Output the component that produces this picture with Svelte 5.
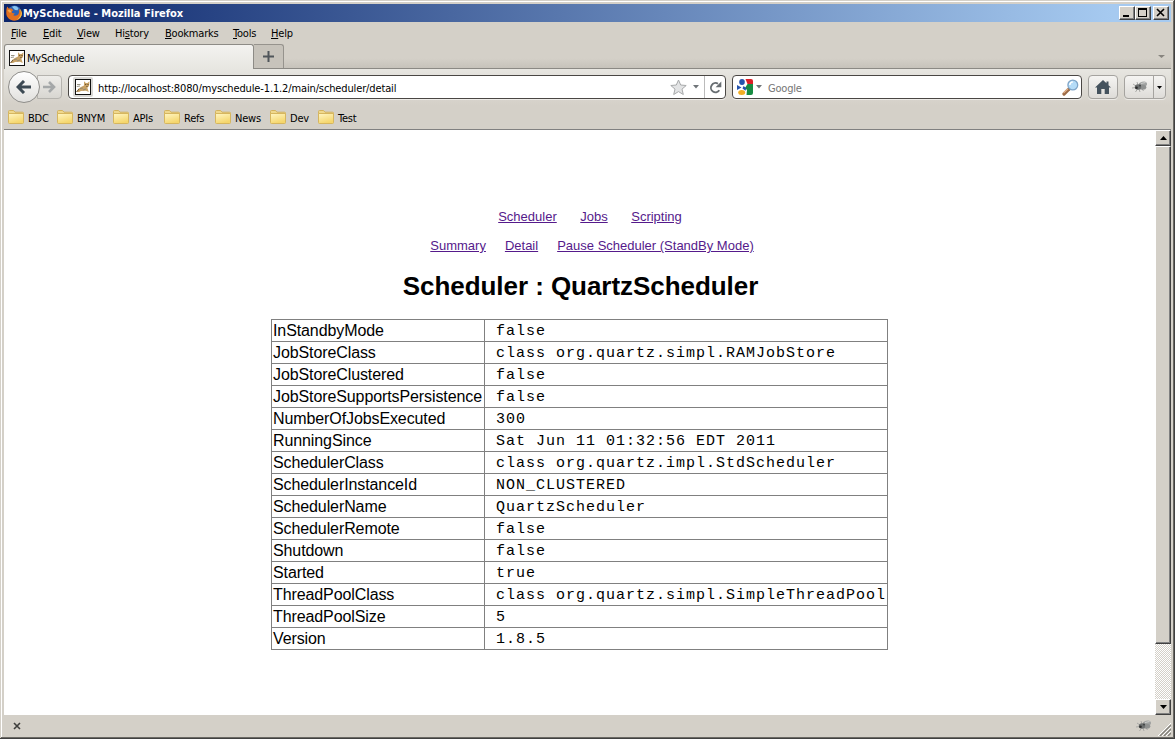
<script>
  const menus = [
    ['F', 'ile', '', 32], ['E', 'dit', '', 34], ['V', 'iew', '', 38], ['s', 'tory', 'Hi', 50],
    ['B', 'ookmarks', '', 68], ['T', 'ools', '', 38], ['H', 'elp', '', 40]
  ];
  const folders = [['BDC', 49], ['BNYM', 56], ['APIs', 51], ['Refs', 51], ['News', 55], ['Dev', 48], ['Test', 50]];
  const rows = [
    ['InStandbyMode', 'false'],
    ['JobStoreClass', 'class org.quartz.simpl.RAMJobStore'],
    ['JobStoreClustered', 'false'],
    ['JobStoreSupportsPersistence', 'false'],
    ['NumberOfJobsExecuted', '300'],
    ['RunningSince', 'Sat Jun 11 01:32:56 EDT 2011'],
    ['SchedulerClass', 'class org.quartz.impl.StdScheduler'],
    ['SchedulerInstanceId', 'NON_CLUSTERED'],
    ['SchedulerName', 'QuartzScheduler'],
    ['SchedulerRemote', 'false'],
    ['Shutdown', 'false'],
    ['Started', 'true'],
    ['ThreadPoolClass', 'class org.quartz.simpl.SimpleThreadPool'],
    ['ThreadPoolSize', '5'],
    ['Version', '1.8.5']
  ];
</script>

{#snippet cat()}
  <svg class="cat" width="16" height="16" viewBox="0 0 16 16">
    <rect x=".5" y=".5" width="15" height="15" fill="#fff" stroke="#111" />
    <path d="M1.500 12.800Q3 9 6 8L9 6.500 9 2.200 10.800 4h1.700L14.500 2.200 14 7l-1.700 1.700L13.800 13 11 11.800 6 12 4 13z" fill="#c8a266" />
    <path d="M2 5.500h3.500M1.800 7.500L5 7M5 9.500l3-.5M8 11l3-1" stroke="#8d8877" stroke-width=".9" fill="none" />
    <path d="M10.200 5.500h1M12.500 5.500h1M11.500 7.500h1" stroke="#5b4322" />
    <path d="M1.500 13l2.500-3" stroke="#6a5436" />
  </svg>
{/snippet}

{#snippet bug()}
  <svg width="18" height="16" viewBox="0 0 18 16">
    <path d="M2 5l3 2M1 9l4-.5M4.500 13l2-3M9 13l-1-3M12.500 12l-2-3M6 3l1 3" stroke="#a4a4a2" stroke-width=".9" />
    <ellipse cx="11.800" cy="5.500" rx="4.300" ry="2.800" fill="#a0a2a1" transform="rotate(-16 11.800 5.500)" />
    <ellipse cx="11.500" cy="8.200" rx="3.800" ry="2.500" fill="#8f9190" />
    <path d="M10 4.500l4.500-1" stroke="#cfd0ce" />
    <ellipse cx="7" cy="8" rx="3.200" ry="2.800" fill="#6c6f6f" />
    <circle cx="5.500" cy="8.800" r="1.300" fill="#2c2c2c" />
    <circle cx="9" cy="6.500" r="1" fill="#444646" />
  </svg>
{/snippet}

<div class="window">
  <div class="titlebar">
    <svg class="fox" width="16" height="16" viewBox="0 0 16 16">
      <circle cx="8.500" cy="6.800" r="6.400" fill="#2d62b4" />
      <path d="M6 1.800q4-2 6.500 1.500l-1 2-2.500-.3L7.500 3.500z" fill="#8ac4ee" />
      <path d="M1.200 1.500L2.800 3.600l2.700-.2 1.700 1.800-1.400 1.600.4 1.300 2.700.4-1.700 1.700c1.500 1 4.500.6 5.600-2 .6-1.500.3-3-.2-4.200C14.800 5.200 15.900 7 15.700 9c-.4 4-3.500 6.700-7.500 6.700S.6 12.600.3 8.800C.1 6 .5 3.500 1.200 1.500z" fill="#e2701f" />
      <path d="M13.500 3.500c2.300 3.800 1.400 8.800-2.900 11.300 3.200-.8 5.200-3.200 5.300-6.300-.1-2.300-1-4-2.400-5z" fill="#f8c64a" />
      <path d="M1.500 5.500l2-1 1.800 1.700L4 8z" fill="#f3a94e" />
    </svg>
    <span class="title">MySchedule - Mozilla Firefox</span>
    <span class="wbtn"><svg width="14" height="12"><path d="M3 8h6v2H3z" /></svg></span>
    <span class="wbtn"><svg width="14" height="12"><path d="M2 1h9v9H2zM3 3v6h7V3z" fill-rule="evenodd" /></svg></span>
    <span class="wbtn last"><svg width="14" height="12"><path d="M3 2l7 7M10 2l-7 7" stroke="#000" stroke-width="1.600" /></svg></span>
  </div>

  <div class="menubar ui">
    {#each menus as [key, rest, pre, w]}
      <span style="width:{w}px">{pre}<u>{key}</u>{rest}</span>
    {/each}
  </div>

  <div class="tabs ui">
    <div class="tab">{@render cat()}<span>MySchedule</span></div>
    <div class="newtab"><svg width="11" height="11"><path d="M5.500 0v11M0 5.500h11" stroke="#50565b" stroke-width="2" /></svg></div>
    <svg class="alltabs" width="7" height="4"><path d="M0 0h7L3.500 3z" fill="#88857f" /></svg>
  </div>

  <div class="navbar ui">
    <div class="navbtns">
      <div class="back"><svg width="16" height="14" viewBox="0 0 16 14"><path d="M8 1L2 7l6 6M2.500 7H15" fill="none" stroke="#3d4a54" stroke-width="3" /></svg></div>
      <div class="fwd"><svg width="13" height="12" viewBox="0 0 13 12"><path d="M6 1l5 5-5 5M0 6h10" fill="none" stroke="#a5a8a9" stroke-width="2.600" /></svg></div>
    </div>
    <div class="url field">
      <div class="ident">{@render cat()}</div>
      <span class="addr">http://localhost:8080/myschedule-1.1.2/main/scheduler/detail</span>
      <svg class="star" width="17" height="17" viewBox="0 0 17 17"><path d="M8.500 1l2.200 5 5.500.5-4.200 3.600 1.300 5.400-4.800-2.900-4.800 2.900L5 10.100.8 6.500 6.300 6z" fill="#e3e4e5" stroke="#a7a9aa" stroke-linejoin="round" /></svg>
      <svg class="dd" width="6" height="4"><path d="M0 0h6L3 3.500z" fill="#707579" /></svg>
      <div class="reload"><svg width="13" height="13" viewBox="0 0 13 13"><path d="M10.300 9.300A4.600 4.600 0 1 1 9 2.800" fill="none" stroke="#686e72" stroke-width="1.900" /><path d="M12.300 .5v5.700H6.600z" fill="#686e72" /></svg></div>
    </div>
    <div class="search field">
      <svg class="goog" width="16" height="16" viewBox="0 0 16 16">
        <path d="M8.500 0H14q2 0 2 2v3h-5.500z" fill="#dc1f26" />
        <path d="M10.500 5H16v9q0 2-2 2H9.500l.5-5-2-2z" fill="#178b42" />
        <ellipse cx="5" cy="3" rx="2.800" ry="3" fill="#2553ad" />
        <path d="M0 6l4.500 2.500L0 11z" fill="#2553ad" />
        <ellipse cx="4.700" cy="13.500" rx="3.500" ry="2.500" fill="#f3ae24" />
        <path d="M6.500 7l2.800 2-.8 2.800L5.500 9.500z" fill="#2553ad" />
      </svg>
      <svg class="dd" width="6" height="4"><path d="M0 0h6L3 3.500z" fill="#707579" /></svg>
      <span class="ph">Google</span>
      <svg class="mag" width="17" height="17" viewBox="0 0 17 17">
        <path d="M2 15L7 10" stroke="#9c6a45" stroke-width="3.200" stroke-linecap="round" />
        <path d="M1.500 14L6 9.800" stroke="#e2b189" stroke-width="1.200" />
        <circle cx="10.800" cy="6" r="4.900" fill="#b5dcf8" stroke="#7fa5c8" stroke-width="1.300" />
        <path d="M7.800 6a3 3 0 0 1 3-3" stroke="#fff" stroke-width="1.500" fill="none" />
      </svg>
    </div>
    <div class="tbtn home"><svg width="16" height="14" viewBox="0 0 16 14"><path d="M8 0l3.500 3.300V1.500h2v3.700L16 7.500h-2V14H9.700V9H6.300v5H2V7.500H0z" fill="#44525d" /></svg></div>
    <div class="tbtn bugbtn"><div class="bugicon">{@render bug()}</div><div class="bugdd"><svg width="5" height="3"><path d="M0 0h5L2.500 3z" /></svg></div></div>
  </div>

  <div class="bookmarks ui">
    {#each folders as [name, w]}
      <div class="bm" style="width:{w}px">
        <svg width="16" height="14" viewBox="0 0 16 14">
          <defs><linearGradient id="fold" x2=".4" y2="1"><stop stop-color="#fff6c4" /><stop offset="1" stop-color="#f5d66c" /></linearGradient></defs>
          <path d="M.5 3V1.500q0-1 1-1H5.500L7 2.200H14.500q1 0 1 1V5H.5z" fill="#efd88d" stroke="#d3b35e" />
          <path d="M.5 3.500h15v9q0 1-1 1h-13q-1 0-1-1z" fill="url(#fold)" stroke="#d6b65f" />
        </svg>
        <span>{name}</span>
      </div>
    {/each}
  </div>

  <div class="view">
    <div class="page">
      <nav class="main"><a href="#s">Scheduler</a><a href="#j">Jobs</a><a href="#c">Scripting</a></nav>
      <nav class="sub"><a href="#m">Summary</a><a href="#d">Detail</a><a href="#p">Pause Scheduler (StandBy Mode)</a></nav>
      <h1>Scheduler : QuartzScheduler</h1>
      <table>
        <tbody>
          {#each rows as [k, v]}
            <tr><td class="k">{k}</td><td class="v">{v}</td></tr>
          {/each}
        </tbody>
      </table>
    </div>
    <div class="scroll">
      <div class="sbtn"><svg width="7" height="4"><path d="M3.500 0L7 4H0z" /></svg></div>
      <div class="thumb"></div>
      <div class="track"></div>
      <div class="sbtn"><svg width="7" height="4"><path d="M0 0h7L3.500 4z" /></svg></div>
    </div>
  </div>

  <div class="status">
    <svg width="8" height="8"><path d="M1 1l6 6M7 1L1 7" stroke="#3e3e3c" stroke-width="1.600" /></svg>
    <div class="sbug">{@render bug()}</div>
    <svg class="grip" width="13" height="13"><path d="M0 13L13 0M4 13l9-9M8 13l5-5" stroke="#fff" /><path d="M2 13L13 2M6 13l7-7M10 13l3-3" stroke="#85827b" stroke-width="1.400" /></svg>
  </div>
</div>

<style>
  :global(body) { margin: 0; background: #d4d0c8; }
  * { box-sizing: border-box; }
  svg { display: block; flex: none; }
  .window {
    width: 1175px; height: 739px; padding: 4px 4px 2px; overflow: hidden;
    display: flex; flex-direction: column; background: #d4d0c8;
    box-shadow: inset -1px -1px #404040, inset 1px 1px #d4d0c8, inset -2px -2px #6b6964, inset 2px 2px #fff;
  }
  .ui { font: 11px "DejaVu Sans Condensed", "DejaVu Sans", sans-serif; font-stretch: condensed; color: #000; letter-spacing: -.2px; white-space: nowrap; }
  .titlebar { height: 18px; flex: none; display: flex; align-items: center; padding: 0 2px; background: linear-gradient(90deg, #0a246a, #a6caf0 95%); }
  .fox { margin-right: 1px; }
  .title { flex: 1; color: #fff; font: bold 11px "DejaVu Sans Condensed", "DejaVu Sans", sans-serif; font-stretch: condensed; letter-spacing: 0; white-space: nowrap; }
  .wbtn { width: 16px; height: 14px; background: #d4d0c8; border: 1px solid; border-color: #fff #404040 #404040 #fff; box-shadow: inset -1px -1px #808080; }
  .last { margin-left: 2px; }
  .menubar { height: 22px; flex: none; display: flex; align-items: center; padding-left: 7px; }
  .menubar span { flex: none; }
  .tabs { height: 25px; flex: none; display: flex; background: linear-gradient(#d4d0c8 60%, #c6c2ba); border-bottom: 1px solid #8b8984; }
  .tab { width: 250px; height: 25px; display: flex; align-items: center; gap: 2px; padding: 1px 0 0 4px; border: 1px solid #8d8b86; border-bottom: 0; border-radius: 3px 3px 0 0; background: linear-gradient(#f3f2f0, #e7e6e1); letter-spacing: -.25px; }
  .tab span { padding-top: 2px; }
  .newtab { width: 30px; height: 24px; display: grid; place-items: center; border: 1px solid #96938d; border-left: 0; border-bottom: 0; border-radius: 0 3px 0 0; background: #c7c3bb; }
  .alltabs { margin: 11px 6px 0 auto; }
  .navbar { height: 36px; flex: none; display: flex; align-items: center; padding: 0 5px 0 4px; background: linear-gradient(#e7e6e1, #d4d0c8); }
  .navbtns { display: flex; align-items: center; width: 60px; }
  .back { width: 32px; height: 32px; border-radius: 50%; border: 1px solid #8f8e8b; background: linear-gradient(#fff, #e1e0dd); display: grid; place-items: center; flex: none; z-index: 1; }
  .fwd { width: 25px; height: 24px; margin-left: -3px; border: 1px solid #b5b3ae; border-radius: 0 4px 4px 0; background: linear-gradient(#eeedea, #d8d6d1); display: grid; place-items: center; }
  .field { height: 24px; border: 1px solid #4a4744; border-radius: 4px; background: #fff; display: flex; align-items: center; box-shadow: 0 1px #eeece8; }
  .url { width: 658px; }
  .ident { width: 20px; height: 20px; margin: 0 2px 0 4px; display: grid; place-items: center; background: #d9d8d5; border-radius: 2px; }
  .addr { margin-left: 3px; padding-top: 2px; flex: 1; letter-spacing: -.13px; }
  .star { margin-right: 6px; }
  .reload { width: 21px; height: 22px; margin-left: 5px; border-left: 1px solid #bbb; display: grid; place-items: center; }
  .search { width: 350px; margin-left: 6px; padding: 0 2px 0 4px; }
  .search .dd { margin-left: 3px; }
  .ph { color: #757575; margin-left: 6px; padding-top: 2px; flex: 1; }
  .tbtn { height: 24px; border: 1px solid #a5a39f; border-radius: 4px; background: linear-gradient(#f5f4f2, #dedcd8); display: flex; align-items: center; justify-content: center; box-shadow: 0 1px #eceae6; }
  .home { width: 30px; margin-left: 6px; }
  .bugbtn { width: 42px; margin-left: 6px; }
  .bugicon { flex: 1; padding-left: 6px; }
  .bugdd { width: 12px; height: 22px; border-left: 1px solid #a5a39f; display: grid; place-items: center; }
  .bookmarks { height: 25px; flex: none; display: flex; align-items: center; padding-left: 4px; border-bottom: 1px solid #808080; }
  .bm { display: flex; align-items: center; gap: 4px; flex: none; }
  .bm span { padding-top: 2px; }
  .view { height: 585px; flex: none; display: flex; background: #fff; }
  .page { width: 1151px; padding-top: 79px; display: flex; flex-direction: column; align-items: center; font-family: "Liberation Sans", Arial, sans-serif; color: #000; }
  nav { display: flex; font-size: 13px; line-height: 15px; white-space: nowrap; }
  nav a { color: #551a8b; }
  .main { gap: 23.500px; padding-left: 21px; }
  .sub { gap: 19px; margin-top: 14px; padding-left: 25px; }
  h1 { margin: 18px 0 0; padding-left: 2px; font-size: 26px; line-height: 30px; font-weight: bold; letter-spacing: -.05px; white-space: nowrap; }
  table { margin-top: 18px; width: 617px; border-collapse: collapse; table-layout: fixed; font-size: 16px; }
  td { height: 22px; padding: 0 1px; border: 1px solid #808080; line-height: 20px; white-space: nowrap; }
  .k { width: 213px; letter-spacing: -.1px; }
  .v { padding: 2px 0 0 11px; line-height: 19px; font-family: "Liberation Mono", "Courier New", monospace; font-size: 15px; letter-spacing: 1px; }
  .scroll { width: 16px; display: flex; flex-direction: column; background: #e9e7e3; }
  .sbtn { height: 16px; flex: none; display: grid; place-items: center; background: #d4d0c8; border: 1px solid; border-color: #fff #404040 #404040 #fff; box-shadow: inset -1px -1px #808080; }
  .thumb { height: 498px; flex: none; background: #d4d0c8; border: 1px solid; border-color: #fff #404040 #404040 #fff; box-shadow: inset -1px -1px #808080; }
  .track { flex: 1; background: repeating-conic-gradient(#fff 0 25%, #d4d0c8 0 50%) 0 0 / 2px 2px; }
  .status { height: 22px; flex: none; display: flex; align-items: center; padding-left: 9px; }
  .sbug { margin-left: auto; }
  .grip { margin: 7px 0 0 5px; }
</style>
